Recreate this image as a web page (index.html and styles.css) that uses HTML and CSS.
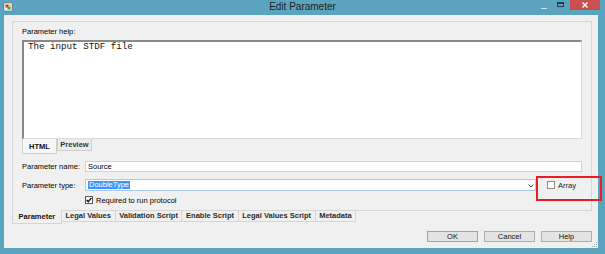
FILE: index.html
```html
<!DOCTYPE html>
<html>
<head>
<meta charset="utf-8">
<link rel="stylesheet" href="styles.css">
</head>
<body>
<div class="window">
  <div class="titlebar">
    <div class="tb-left">
      <svg class="app-icon" width="10" height="10" viewBox="0 0 10 10">
        <rect x="0.5" y="0.5" width="9" height="9" rx="1.5" fill="#c9d6e0" stroke="#6f8796"/>
        <rect x="2" y="2" width="6" height="6" fill="#eef2f5"/>
        <rect x="2.5" y="2.5" width="3" height="3" fill="#d8322e"/>
        <rect x="4.5" y="4.5" width="3" height="3" fill="#3aa845"/>
        <rect x="5.5" y="2.5" width="2" height="2" fill="#f1c232"/>
      </svg>
    </div>
    <div class="title">Edit Parameter</div>
    <div class="controls">
      <span class="min"></span>
      <span class="max"></span>
      <span class="close">
        <svg width="8" height="6" viewBox="0 0 8 6"><path d="M1.5 0.5 L6.5 5.5 M6.5 0.5 L1.5 5.5" stroke="#fff" stroke-width="1.4"/></svg>
      </span>
    </div>
  </div>
  <div class="client">
    <div class="panel">
      <div class="help-label">Parameter help:</div>
      <div class="help-box">The input STDF file</div>
      <div class="subtabs">
        <span class="subtab active">HTML</span>
        <span class="subtab">Preview</span>
      </div>
      <div class="row name-row">
        <span class="label">Parameter name:</span>
        <div class="textbox">Source</div>
      </div>
      <div class="row type-row">
        <span class="label">Parameter type:</span>
        <div class="combo">
          <span class="sel">DoubleType</span>
          <svg class="chev" width="6" height="4" viewBox="0 0 6 4"><path d="M0.5 0.5 L3 3 L5.5 0.5" fill="none" stroke="#444" stroke-width="1"/></svg>
        </div>
        <div class="array"><span class="cb"></span><span>Array</span></div>
      </div>
      <div class="row req-row">
        <span class="cb checked">
          <svg width="6" height="6" viewBox="0 0 6 6"><path d="M0.6 3 L2.3 4.8 L5.4 0.9" fill="none" stroke="#111" stroke-width="1.4"/></svg>
        </span>
        <span class="req-text">Required to run protocol</span>
      </div>
    </div>
    <div class="tabs">
      <span class="tab active">Parameter</span>
      <span class="tab">Legal Values</span>
      <span class="tab">Validation Script</span>
      <span class="tab">Enable Script</span>
      <span class="tab">Legal Values Script</span>
      <span class="tab">Metadata</span>
    </div>
    <div class="buttons">
      <span class="btn default">OK</span>
      <span class="btn">Cancel</span>
      <span class="btn">Help</span>
    </div>
    <svg class="grip" width="7" height="7" viewBox="0 0 7 7">
      <rect x="5" y="1" width="1" height="1" fill="#a0a0a0"/>
      <rect x="3" y="3" width="1" height="1" fill="#a0a0a0"/>
      <rect x="5" y="3" width="1" height="1" fill="#a0a0a0"/>
      <rect x="1" y="5" width="1" height="1" fill="#a0a0a0"/>
      <rect x="3" y="5" width="1" height="1" fill="#a0a0a0"/>
      <rect x="5" y="5" width="1" height="1" fill="#a0a0a0"/>
    </svg>
  </div>
  <div class="annot"></div>
</div>
</body>
</html>
```

FILE: styles.css
```css
* { box-sizing: border-box; }
html, body { margin: 0; padding: 0; }
body {
  width: 605px;
  height: 254px;
  overflow: hidden;
  background: #5aa4bf;
  font-family: "Liberation Sans", Arial, sans-serif;
  font-size: 7.5px;
  color: #000;
}
.window {
  position: relative;
  width: 605px;
  height: 254px;
  display: flex;
  flex-direction: column;
}
.titlebar {
  height: 15px;
  display: grid;
  grid-template-columns: 1fr auto 1fr;
  align-items: start;
}
.tb-left { padding: 2px 0 0 3px; }
.app-icon { display: block; }
.title {
  font-size: 10px;
  line-height: 14px;
  color: #1e1e1e;
}
.controls {
  display: flex;
  justify-content: flex-end;
  align-items: flex-start;
  padding-right: 5px;
}
.min {
  width: 6px;
  height: 1px;
  background: #cfe3ec;
  margin-top: 8px;
  margin-right: 10px;
}
.max {
  width: 7px;
  height: 5px;
  border: 1px solid #1f3f4e;
  border-top-width: 2px;
  margin-top: 2px;
  margin-right: 6px;
}
.close {
  width: 30px;
  height: 10px;
  background: #c95050;
  display: flex;
  align-items: center;
  justify-content: center;
}
.close svg { display: block; }
.client {
  position: relative;
  flex: 1;
  margin: 0 7px 6px 4px;
  background: #f0f0f0;
  padding: 6px 6px 0 8px;
  display: flex;
  flex-direction: column;
}
.panel {
  height: 190px;
  border: 1px solid #d6d6d6;
  padding: 5px 9px 0 9px;
  display: flex;
  flex-direction: column;
}
.help-label {
  height: 10px;
  line-height: 10px;
  margin-bottom: 3px;
}
.help-box {
  height: 99px;
  background: #fff;
  border-top: 2px solid #8a8a8a;
  border-left: 2px solid #8a8a8a;
  border-right: 1px solid #dadada;
  border-bottom: 1px solid #dadada;
  font-family: "Liberation Mono", "Courier New", monospace;
  font-size: 9.2px;
  line-height: 10px;
  padding: 0 0 0 4px;
  color: #111;
}
.subtabs {
  display: flex;
  align-items: flex-start;
  height: 15px;
}
.subtab {
  width: 35px;
  height: 12px;
  line-height: 11px;
  text-align: center;
  border: 1px solid #cfcfcf;
  border-top: none;
  background: #ebebeb;
  font-weight: bold;
  color: #333;
}
.subtab.active {
  height: 15px;
  line-height: 15px;
  background: #f7f7f7;
  color: #111;
}
.row {
  display: flex;
  align-items: center;
}
.label { width: 63px; flex: none; }
.name-row { margin-top: 7px; height: 11px; }
.textbox {
  flex: 1;
  height: 11px;
  background: #fff;
  border: 1px solid #d2d2d2;
  line-height: 9px;
  padding-left: 2px;
}
.type-row { margin-top: 7px; height: 12px; }
.combo {
  width: 451px;
  height: 12px;
  flex: none;
  background: #fff;
  border: 1px solid #a9cbec;
  display: flex;
  align-items: center;
  justify-content: space-between;
  padding: 0 1px 0 2px;
}
.sel {
  background: #3399ff;
  color: #fff;
  height: 8px;
  line-height: 8px;
  padding: 0 1px;
}
.chev { display: block; margin-top: 1px; }
.array {
  display: flex;
  align-items: center;
  margin-left: 11px;
  color: #222;
}
.cb {
  width: 8px;
  height: 8px;
  border: 1px solid #8e8e8e;
  background: #fff;
  margin-right: 3px;
  display: flex;
  align-items: center;
  justify-content: center;
  flex: none;
}
.req-row { margin-top: 5px; height: 8px; padding-left: 63px; }
.cb.checked { border-color: #555; }
.cb.checked svg { display: block; }
.tabs {
  display: flex;
  align-items: flex-start;
  margin-top: -1px;
  height: 14px;
}
.tab {
  margin-top: 1px;
  height: 11px;
  line-height: 10px;
  padding: 0 3.6px;
  border: 1px solid #d6d6d6;
  border-top: none;
  border-left: none;
  font-weight: bold;
  color: #2a2a2a;
  white-space: nowrap;
}
.tab.active {
  margin-top: 0;
  height: 14px;
  line-height: 13px;
  padding: 0 5.6px;
  border-left: 1px solid #d6d6d6;
  background: #f0f0f0;
  color: #111;
}
.buttons {
  display: flex;
  justify-content: flex-end;
  gap: 6px;
  margin-top: 7px;
}
.btn {
  width: 51px;
  height: 11px;
  border: 1px solid #adadad;
  background: #e3e3e3;
  text-align: center;
  line-height: 9px;
  color: #111;
}
.btn.default { border-color: #6fb0ea; }
.grip {
  position: absolute;
  right: 0;
  bottom: 0;
  display: block;
}
.annot {
  position: absolute;
  left: 536px;
  top: 176px;
  width: 66px;
  height: 25px;
  border: 2.5px solid #ec1c24;
}
```
